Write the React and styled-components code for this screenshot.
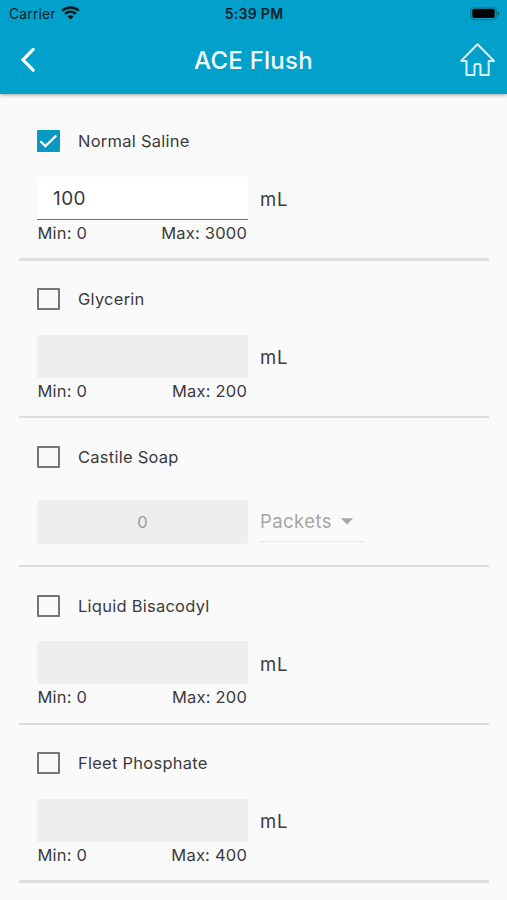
import React, { useState } from 'react';
import styled, { createGlobalStyle } from 'styled-components';

const GlobalStyle = createGlobalStyle`
  * {
    box-sizing: border-box;
  }

  body {
    margin: 0;
    background: #fafafa;
    color: #3a3a3c;
    font-family: Inter, Roboto, sans-serif;
    overflow: hidden;
  }
`;

const Screen = styled.div`
  width: 100%;
  height: 900px;
  overflow: hidden;
  background: #fafafa;
`;

const AppBar = styled.header`
  height: 94px;
  background: #02a1cb;
  box-shadow: 0 1px 4px rgba(0, 0, 0, 0.35);
`;

const StatusBar = styled.div`
  display: grid;
  grid-template-columns: 1fr auto 1fr;
  align-items: center;
  height: 27px;
  padding: 0 7px 0 9px;
  color: #06222b;
`;

const Carrier = styled.div`
  display: flex;
  align-items: center;
  gap: 5px;
  font-size: 14px;
  letter-spacing: 0.1px;
`;

const Clock = styled.div`
  margin-left: -1px;
  font-size: 14px;
  font-weight: 600;
  letter-spacing: 0.3px;
`;

const BatterySlot = styled.div`
  display: flex;
  justify-content: flex-end;
`;

const NavBar = styled.div`
  display: grid;
  grid-template-columns: 60px 1fr 60px;
  align-items: center;
  height: 66px;
`;

const Title = styled.h1`
  margin: 0;
  color: #f2fcff;
  font-size: 24px;
  font-weight: 500;
  letter-spacing: 0.25px;
  text-align: center;
`;

const IconButton = styled.button`
  display: flex;
  justify-content: ${({ $end }) => ($end ? 'flex-end' : 'flex-start')};
  padding: ${({ $end }) => ($end ? '0 11px 0 0' : '0 0 0 19px')};
  border: 0;
  background: none;
`;

const List = styled.main`
  padding: 9px 18.5px 0 19px;
`;

const Item = styled.section`
  display: flex;
  flex-direction: column;
  height: ${({ $compact }) => ($compact ? '149px' : '157.7px')};
  padding: 27.2px 0 0 18px;
`;

const CheckRow = styled.label`
  display: flex;
  align-items: center;
  gap: 18px;
  height: 22px;
  font-size: 16.5px;
  letter-spacing: 0.25px;
`;

const CheckBox = styled.span`
  display: flex;
  align-items: center;
  justify-content: center;
  width: 23px;
  height: 22px;
  border: 2px solid ${({ $checked }) => ($checked ? '#0799c2' : '#757575')};
  border-radius: 1px;
  background: ${({ $checked }) => ($checked ? '#0799c2' : 'transparent')};
`;

const HiddenInput = styled.input`
  display: none;
`;

const FieldRow = styled.div`
  display: flex;
  align-items: center;
  gap: 12px;
  margin-top: ${({ $compact }) => ($compact ? '32px' : '24.7px')};
`;

const Field = styled.input`
  width: 211px;
  height: ${({ $compact }) => ($compact ? '44px' : '43px')};
  padding: ${({ $compact }) => ($compact ? '0 16px' : '2px 16px 0')};
  border: 0;
  border-bottom: ${({ disabled }) => (disabled ? '0' : '1.5px solid #757575')};
  border-radius: ${({ disabled }) => (disabled ? '3px' : '0')};
  outline: 0;
  background: ${({ disabled }) => (disabled ? '#eeeeee' : '#ffffff')};
  color: ${({ disabled }) => (disabled ? '#9a9a9a' : '#3a3a3c')};
  font-family: inherit;
  font-size: ${({ $compact }) => ($compact ? '16.5px' : '19px')};
  letter-spacing: ${({ $compact }) => ($compact ? '0' : '0.4px')};
  text-align: ${({ $compact }) => ($compact ? 'center' : 'left')};
`;

const Unit = styled.span`
  padding-top: 2px;
  font-size: 18.5px;
  letter-spacing: 0.7px;
`;

const UnitSelect = styled.div`
  display: flex;
  align-items: center;
  gap: 9px;
  width: 104px;
  height: 40px;
  border-bottom: 1px solid #e8e8e8;
  color: #a6a6a6;
  font-size: 18.5px;
  letter-spacing: 0.45px;
`;

const Limits = styled.div`
  display: flex;
  justify-content: space-between;
  width: 211px;
  padding: 0 1px 0 0.5px;
  line-height: 27px;
  font-size: 16.5px;
  letter-spacing: 0.2px;
`;

const Divider = styled.div`
  height: 2.5px;
  margin: auto 0 0 -18px;
  background: #dedede;
`;

const WifiIcon = () => (
  <svg width="19" height="15" viewBox="0 0 19 15" fill="none" stroke="#06161c" strokeWidth="2.5">
    <path d="M1.2 4.6C6 .3 13 .3 17.8 4.6" />
    <path d="M4.1 7.9c3.2-2.8 7.6-2.8 10.8 0" />
    <path d="M9.5 13.4l-3-3c1.8-1.5 4.2-1.5 6 0z" fill="#06161c" stroke="none" />
  </svg>
);

const BatteryIcon = () => (
  <svg width="30" height="14" viewBox="0 0 30 14">
    <rect x="0.7" y="0.2" width="25.6" height="12.4" rx="3.8" fill="none" stroke="#04718e" strokeWidth="1.3" />
    <rect x="2.3" y="1.8" width="22.4" height="9.2" rx="2" fill="#000" />
    <path d="M27.7 4.5v4c1-.4 1.5-1.1 1.5-2s-.5-1.6-1.5-2z" fill="#04607a" />
  </svg>
);

const BackIcon = () => (
  <svg width="18" height="26" viewBox="0 0 18 26" fill="none" stroke="#fff" strokeWidth="3.2" strokeLinecap="round">
    <path d="M14.2 2.4L4 12.8L14.2 23.2" />
  </svg>
);

const HomeIcon = () => (
  <svg width="37" height="36" viewBox="0 0 37 36" fill="none" stroke="#d8f5ff" strokeWidth="2" strokeLinejoin="round">
    <path d="M18.5 2.3L2.2 18.9h5.3v14.2h8V24q0-2 2-2h2q2 0 2 2v9.1h8.2V18.9h5.3z" />
  </svg>
);

const CheckIcon = () => (
  <svg width="19" height="18" viewBox="0 0 19 18" fill="none" stroke="#fff" strokeWidth="2.2">
    <path d="M1.4 9.2l5 4.9L17.3 3.5" />
  </svg>
);

const CaretIcon = () => (
  <svg width="12" height="7" viewBox="0 0 12 7">
    <path d="M0 .3h12L6 6.5z" fill="#a6a6a6" />
  </svg>
);

const solutions = [
  { name: 'Normal Saline', value: '100', max: 3000, checked: true },
  { name: 'Glycerin', value: '', max: 200 },
  { name: 'Castile Soap', value: '0', packets: true },
  { name: 'Liquid Bisacodyl', value: '', max: 200 },
  { name: 'Fleet Phosphate', value: '', max: 400 },
];

function SolutionItem({ solution }) {
  const { name, max, packets } = solution;
  const [checked, setChecked] = useState(Boolean(solution.checked));
  const [value, setValue] = useState(solution.value);

  return (
    <Item $compact={packets}>
      <CheckRow>
        <HiddenInput type="checkbox" checked={checked} onChange={() => setChecked(!checked)} />
        <CheckBox $checked={checked}>{checked && <CheckIcon />}</CheckBox>
        {name}
      </CheckRow>
      <FieldRow $compact={packets}>
        <Field
          $compact={packets}
          disabled={!checked}
          value={value}
          onChange={(e) => setValue(e.target.value)}
        />
        {packets ? (
          <UnitSelect>
            Packets
            <CaretIcon />
          </UnitSelect>
        ) : (
          <Unit>mL</Unit>
        )}
      </FieldRow>
      {!packets && (
        <Limits>
          <span>Min: 0</span>
          <span>Max: {max}</span>
        </Limits>
      )}
      <Divider />
    </Item>
  );
}

function App() {
  return (
    <>
      <GlobalStyle />
      <Screen>
        <AppBar>
          <StatusBar>
            <Carrier>
              Carrier
              <WifiIcon />
            </Carrier>
            <Clock>5:39 PM</Clock>
            <BatterySlot>
              <BatteryIcon />
            </BatterySlot>
          </StatusBar>
          <NavBar>
            <IconButton aria-label="Back">
              <BackIcon />
            </IconButton>
            <Title>ACE Flush</Title>
            <IconButton $end aria-label="Home">
              <HomeIcon />
            </IconButton>
          </NavBar>
        </AppBar>
        <List>
          {solutions.map((solution) => (
            <SolutionItem key={solution.name} solution={solution} />
          ))}
        </List>
      </Screen>
    </>
  );
}

export default App;
